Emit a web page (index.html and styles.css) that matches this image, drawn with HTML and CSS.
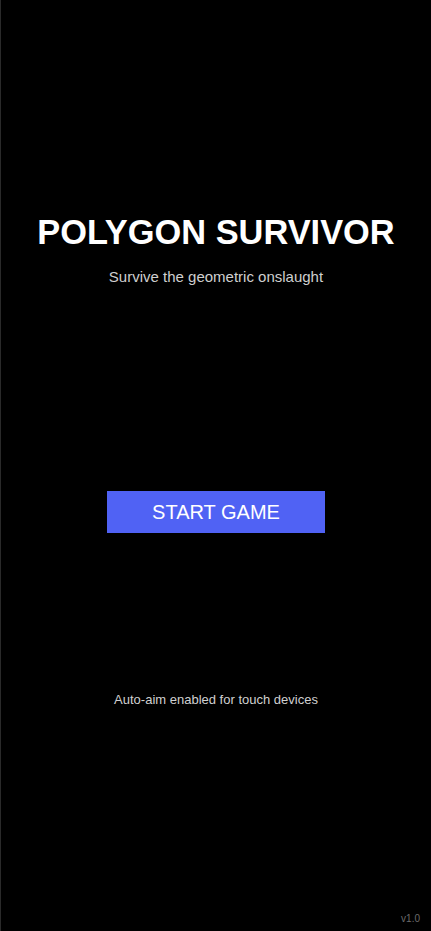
FILE: index.html
```html
<!DOCTYPE html>
<html lang="en">
<head>
<meta charset="utf-8">
<title>Polygon Survivor</title>
<link rel="stylesheet" href="styles.css">
</head>
<body>
<main class="screen">
  <h1 class="title">POLYGON SURVIVOR</h1>
  <p class="subtitle">Survive the geometric onslaught</p>
  <button class="start">START GAME</button>
  <p class="hint">Auto-aim enabled for touch devices</p>
  <span class="version">v1.0</span>
</main>
</body>
</html>
```
FILE: styles.css
```css
html, body {
  margin: 0;
  padding: 0;
  background: #000;
}
body {
  font-family: "Liberation Sans", Arial, sans-serif;
}
.screen {
  position: relative;
  box-sizing: border-box;
  width: 431px;
  height: 931px;
  border-left: 1px solid #2a2a2a;
  display: flex;
  flex-direction: column;
  align-items: center;
  padding-top: 215px;
}
.title {
  margin: 0;
  font-size: 34.4px;
  line-height: 35px;
  font-weight: 700;
  color: #fff;
}
.subtitle {
  margin: 19px 0 0;
  font-size: 15px;
  line-height: 16px;
  color: #cfcfcf;
}
.start {
  margin-top: 206px;
  width: 218px;
  height: 42px;
  border: none;
  padding: 0;
  background: #5062f4;
  color: #fff;
  font-family: "Liberation Sans", Arial, sans-serif;
  font-size: 20px;
  cursor: pointer;
}
.hint {
  margin: 160px 0 0;
  font-size: 13px;
  line-height: 14px;
  color: #d0d0d0;
}
.version {
  position: absolute;
  right: 11px;
  bottom: 7px;
  font-size: 10px;
  color: #6a6a6a;
}
```
